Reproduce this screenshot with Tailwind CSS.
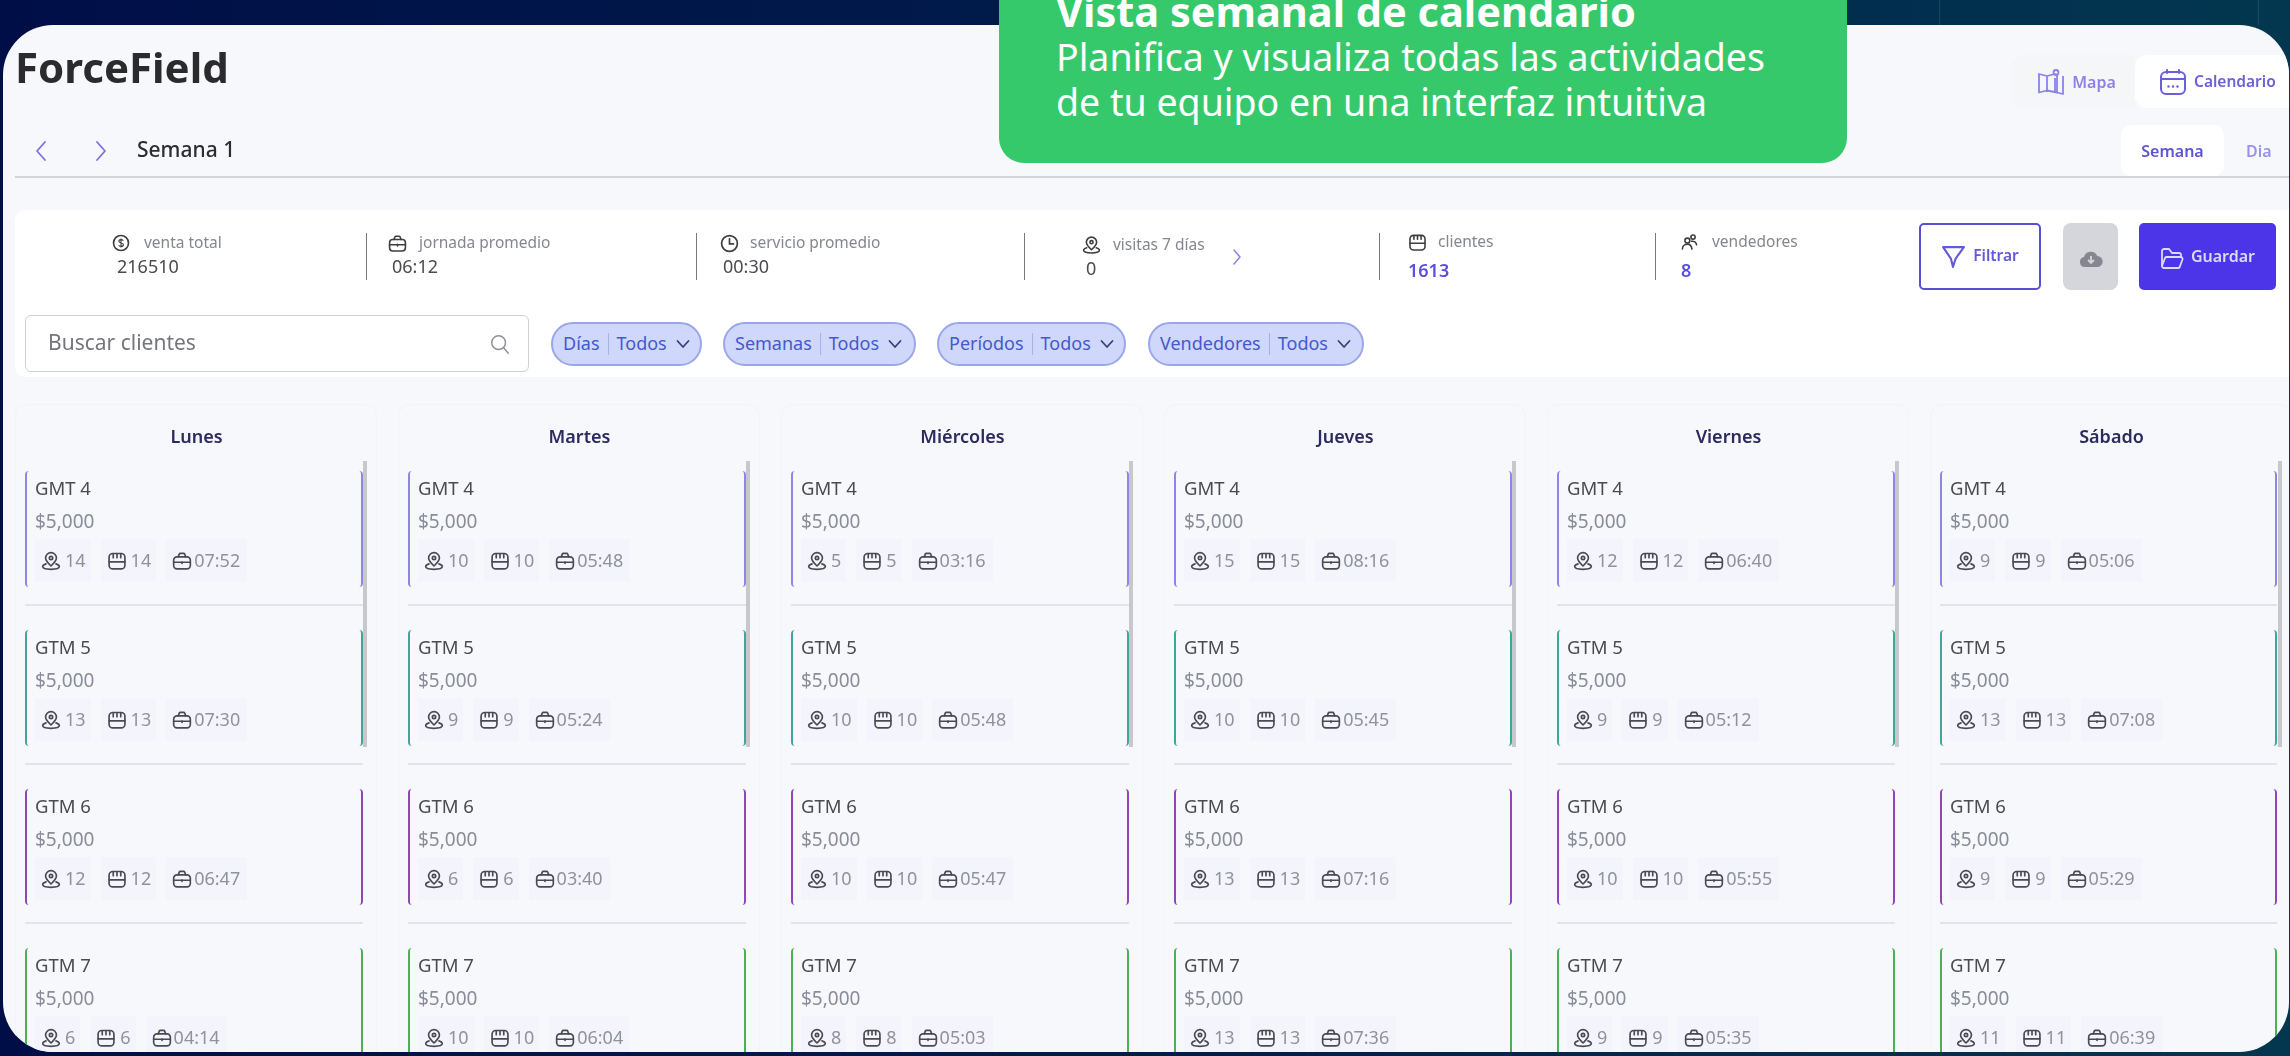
<!doctype html>
<html lang="es">
<head>
<meta charset="utf-8">
<title>ForceField</title>
<script src="https://cdn.jsdelivr.net/npm/@tailwindcss/browser@4"></script>
</head>
<body class="m-0 h-[1056px] w-[2290px] overflow-hidden font-['Noto_Sans','Open_Sans',sans-serif]">
<svg class="hidden" width="0" height="0">
  <symbol id="pin" viewBox="0 0 24 24" fill="none" stroke="currentColor" stroke-width="2" stroke-linecap="round" stroke-linejoin="round"><path d="M12 2a6.500 6.500 0 0 0-6.500 6.500c0 3.500 3 6.300 6.500 9.500 3.500-3.200 6.500-6 6.500-9.500A6.500 6.500 0 0 0 12 2z"/><circle cx="12" cy="8.500" r="2"/><path d="M6 15.500c-2.300.7-4 1.800-4 3.200 0 2 4.500 3.300 10 3.300s10-1.300 10-3.300c0-1.400-1.700-2.500-4-3.200"/></symbol>
  <symbol id="store" viewBox="0 0 24 24" fill="none" stroke="currentColor" stroke-width="2" stroke-linecap="round" stroke-linejoin="round"><rect x="2.500" y="3" width="19" height="18.500" rx="4.500"/><path d="M2.500 13h19M7.500 3.500v4.500M12 3.500v4.500M16.500 3.500v4.500"/></symbol>
  <symbol id="case" viewBox="0 0 24 24" fill="none" stroke="currentColor" stroke-width="2" stroke-linecap="round" stroke-linejoin="round"><rect x="2" y="7" width="20" height="14.500" rx="4"/><path d="M7.500 7l1.200-3.200a1.500 1.500 0 0 1 1.400-1h3.800a1.500 1.500 0 0 1 1.400 1L16.500 7M2 13.500h20M12 13v2"/></symbol>
</svg>

<div class="relative h-[1056px] w-[2290px] overflow-hidden bg-linear-to-r from-[#000e47] via-[#011c4b] to-[#03374f] pl-[3px] pt-[25px]">
  <div class="absolute left-[1939px] top-0 h-[25px] w-px bg-white/10"></div>
  <div class="absolute left-[2258px] top-0 h-[25px] w-px bg-white/10"></div>

  <div class="h-[1027px] w-[2286px] overflow-hidden rounded-[50px] bg-[#f7f8fc] pl-[12px] pt-[30px] blur-[0.5px]">
    <div class="flex h-[53px] items-center justify-between">
      <h1 class="m-0 mb-[30px] text-[42px] leading-none font-bold text-[#2b2b2e]">ForceField</h1>
      <div class="flex h-[53px]">
        <div class="flex w-[123px] items-center justify-center gap-[7px] rounded-l-xl bg-[#f5f6f8] pl-[6px] text-[16px] font-semibold text-[#8c82e6]">
          <svg class="h-[28px] w-[28px]" viewBox="0 0 28 28" fill="none" stroke="currentColor" stroke-width="1.800" stroke-linejoin="round"><path d="M2 6l8 2 8-2 2 .5v18l-10-2-8 2zM10 8v16M18 10v14"/><circle cx="19" cy="4.500" r="2.500"/><path d="M26 8v18l-6-1.500"/></svg>
          Mapa
        </div>
        <div class="flex w-[154px] items-center gap-[7px] rounded-l-xl bg-white pl-[24px] text-[15.500px] font-semibold text-[#6a60da]">
          <svg class="h-[28px] w-[28px]" viewBox="0 0 28 28" fill="none" stroke="currentColor" stroke-width="2" stroke-linecap="round" stroke-linejoin="round"><rect x="2" y="4" width="24" height="22" rx="5"/><path d="M2 11h24M8 2v3M20 2v3"/><path d="M9.500 18.500h.01M14 18.500h.01M18.500 18.500h.01" stroke-width="2.500"/></svg>
          Calendario
        </div>
      </div>
    </div>

    <div class="mt-[17px] flex h-[53px] items-start justify-between border-b-2 border-[#d2d4da]">
      <div class="flex h-[51px] items-center text-[#7d70e4]">
        <svg class="ml-[18px] h-[24px] w-[16px]" viewBox="0 0 16 24" fill="none" stroke="currentColor" stroke-width="1.800" stroke-linecap="round" stroke-linejoin="round"><path d="M12 3L4 12l8 9"/></svg>
        <svg class="ml-[44px] h-[24px] w-[16px]" viewBox="0 0 16 24" fill="none" stroke="currentColor" stroke-width="1.800" stroke-linecap="round" stroke-linejoin="round"><path d="M4 3l8 9-8 9"/></svg>
        <span class="mb-[2px] ml-[28px] text-[21px] font-medium text-[#2d2d30]">Semana 1</span>
      </div>
      <div class="flex h-[51px]">
        <div class="flex w-[103px] items-center justify-center rounded-[10px] bg-white text-[16px] font-semibold text-[#5f55d4]">Semana</div>
        <div class="flex w-[65px] items-center pl-[22px] text-[16px] font-semibold text-[#9b92ea]">Dia</div>
      </div>
    </div>

    <section class="mt-[32px] h-[167px] rounded-l-[10px] bg-white pt-[13px]">
      <div class="flex h-[67px] items-center">
        <div class="h-[47px] w-[351px] pl-[97px]">
          <div class="flex h-[20px] items-center gap-[14px] text-[15.500px] text-[#85878f]"><svg class="h-[18px] w-[18px] text-[#3e3e42]" viewBox="0 0 24 24" fill="none" stroke="currentColor" stroke-width="2.200"><circle cx="12" cy="12" r="10"/><path d="M15 9c-.5-1.200-1.500-1.500-3-1.500-1.600 0-2.800.7-2.800 2.200 0 3 6 1.500 6 4.500 0 1.500-1.400 2.300-3.200 2.300-1.500 0-2.600-.5-3.100-1.700M12 6v12" stroke-width="1.500"/></svg>venta total</div>
          <div class="ml-[5px] mt-[2px] text-[18px] leading-[22px] text-[#4b4b50]">216510</div>
        </div>
        <div class="h-[47px] w-[330px] border-l-[1.500px] border-[#77787d] pl-[21px]">
          <div class="flex h-[20px] items-center gap-[12px] text-[15.500px] text-[#85878f]"><svg class="h-[19px] w-[19px] text-[#3e3e42]"><use href="#case"/></svg>jornada promedio</div>
          <div class="ml-[4px] mt-[2px] text-[18px] leading-[22px] text-[#4b4b50]">06:12</div>
        </div>
        <div class="h-[47px] w-[328px] border-l-[1.500px] border-[#77787d] pl-[23px]">
          <div class="flex h-[20px] items-center gap-[11px] text-[15.500px] text-[#85878f]"><svg class="h-[19px] w-[19px] text-[#3e3e42]" viewBox="0 0 24 24" fill="none" stroke="currentColor" stroke-width="2.200" stroke-linecap="round"><circle cx="12" cy="12" r="10"/><path d="M12 6v6.500h5"/></svg>servicio promedio</div>
          <div class="ml-[3px] mt-[2px] text-[18px] leading-[22px] text-[#4b4b50]">00:30</div>
        </div>
        <div class="flex h-[47px] w-[355px] items-center border-l-[1.500px] border-[#77787d] pl-[57px]">
          <div class="w-[150px]">
            <div class="flex h-[20px] items-center gap-[12px] text-[15.500px] text-[#85878f]"><svg class="h-[20px] w-[19px] text-[#3e3e42]"><use href="#pin"/></svg>visitas 7 días</div>
            <div class="ml-[4px] mt-[2px] text-[18px] leading-[22px] text-[#4b4b50]">0</div>
          </div>
          <svg class="h-[18px] w-[10px] text-[#8c80e8]" viewBox="0 0 10 18" fill="none" stroke="currentColor" stroke-width="1.500" stroke-linecap="round" stroke-linejoin="round"><path d="M2 2l6 7-6 7"/></svg>
        </div>
        <div class="h-[47px] w-[276px] border-l-[1.500px] border-[#77787d] pl-[28px]">
          <div class="flex h-[18px] items-center gap-[11px] text-[15.500px] text-[#85878f]"><svg class="h-[19px] w-[19px] text-[#3e3e42]"><use href="#store"/></svg>clientes</div>
          <div class="mt-[9px] text-[18px] leading-[20px] font-semibold text-[#5b4ee2]">1613</div>
        </div>
        <div class="h-[47px] w-[264px] border-l-[1.500px] border-[#77787d] pl-[25px]">
          <div class="flex h-[18px] items-center gap-[14px] text-[15.500px] text-[#85878f]"><svg class="h-[18px] w-[17px] text-[#3e3e42]" viewBox="0 0 24 24" fill="none" stroke="currentColor" stroke-width="2.200" stroke-linecap="round"><circle cx="9" cy="10" r="3.500"/><circle cx="17" cy="5" r="3"/><path d="M2 22c0-4 3-7 7-7s6 3 6.500 7M15 11c3.500-.5 6.500 1.500 7 5"/></svg>vendedores</div>
          <div class="mt-[9px] text-[18px] leading-[20px] font-semibold text-[#5b4ee2]">8</div>
        </div>
        <button class="flex h-[67px] w-[122px] items-center justify-center gap-[7px] rounded-[5px] border-2 border-[#5a4fd3] bg-white pb-[2px] text-[15.500px] font-semibold text-[#6458d8]">
          <svg class="mt-[2px] h-[25px] w-[25px]" viewBox="0 0 24 24" fill="none" stroke="currentColor" stroke-width="2" stroke-linejoin="round"><path d="M2 3h20l-8 11-2.500 8-2-8z"/></svg>Filtrar
        </button>
        <button class="ml-[22px] flex h-[67px] w-[55px] items-center justify-center rounded-[8px] bg-[#d5d6db]">
          <svg class="mt-[4px] h-[20px] w-[24px]" viewBox="0 0 24 20"><path fill="#85868f" d="M6 18a5 5 0 0 1-1-9.900A7 7 0 0 1 18.300 7 5.500 5.500 0 0 1 18 18z"/><path d="M12 7v6M9 11l3 3 3-3" fill="none" stroke="#d5d6db" stroke-width="1.800"/></svg>
        </button>
        <button class="ml-[21px] flex h-[67px] w-[137px] items-center justify-center gap-[7px] rounded-[5px] bg-[#4c35e8] pb-[2px] text-[16px] font-semibold text-[#dcdaf9]">
          <svg class="mt-[4px] h-[24px] w-[24px]" viewBox="0 0 24 24" fill="none" stroke="currentColor" stroke-width="1.800" stroke-linejoin="round"><path d="M2 20V5a2 2 0 0 1 2-2h5l3 4h7a2 2 0 0 1 2 2v2"/><path d="M2 20l3-8a2 2 0 0 1 2-1h14a2 2 0 0 1 1.500 2.500L20 20a2 2 0 0 1-2 2H4a2 2 0 0 1-2-2z"/></svg>Guardar
        </button>
      </div>

      <div class="mt-[25px] flex items-center pl-[10px]">
        <div class="flex h-[57px] w-[504px] items-center justify-between rounded-[6px] border-[1.500px] border-[#cfd0d5] bg-white pb-[2px] pl-[22px] pr-[17px] text-[21px] text-[#74767c]">
          Buscar clientes
          <svg class="mt-[3px] h-[22px] w-[22px] text-[#8e9096]" viewBox="0 0 24 24" fill="none" stroke="currentColor" stroke-width="1.600" stroke-linecap="round"><circle cx="10.500" cy="10.500" r="7.500"/><path d="M16 16l5 6"/></svg>
        </div>
        <div class="ml-[22px] flex h-[44px] w-[151px] items-center gap-[8px] rounded-full border-2 border-[#9aa6ea] bg-[#cfd7fb] pl-[10px] text-[18px] text-[#4558cc]">Días<span class="h-[22px] w-px bg-[#a7b0e2]"></span>Todos<svg class="ml-[1px] h-[10px] w-[14px] text-[#3a3f7a]" viewBox="0 0 14 10" fill="none" stroke="currentColor" stroke-width="1.800" stroke-linecap="round" stroke-linejoin="round"><path d="M1.500 2l5.500 6 5.500-6"/></svg></div>
        <div class="ml-[21px] flex h-[44px] w-[193px] items-center gap-[8px] rounded-full border-2 border-[#9aa6ea] bg-[#cfd7fb] pl-[10px] text-[18px] text-[#4558cc]">Semanas<span class="h-[22px] w-px bg-[#a7b0e2]"></span>Todos<svg class="ml-[1px] h-[10px] w-[14px] text-[#3a3f7a]" viewBox="0 0 14 10" fill="none" stroke="currentColor" stroke-width="1.800" stroke-linecap="round" stroke-linejoin="round"><path d="M1.500 2l5.500 6 5.500-6"/></svg></div>
        <div class="ml-[21px] flex h-[44px] w-[189px] items-center gap-[8px] rounded-full border-2 border-[#9aa6ea] bg-[#cfd7fb] pl-[10px] text-[18px] text-[#4558cc]">Períodos<span class="h-[22px] w-px bg-[#a7b0e2]"></span>Todos<svg class="ml-[1px] h-[10px] w-[14px] text-[#3a3f7a]" viewBox="0 0 14 10" fill="none" stroke="currentColor" stroke-width="1.800" stroke-linecap="round" stroke-linejoin="round"><path d="M1.500 2l5.500 6 5.500-6"/></svg></div>
        <div class="ml-[22px] flex h-[44px] w-[216px] items-center gap-[8px] rounded-full border-2 border-[#9aa6ea] bg-[#cfd7fb] pl-[10px] text-[18px] text-[#4558cc]">Vendedores<span class="h-[22px] w-px bg-[#a7b0e2]"></span>Todos<svg class="ml-[1px] h-[10px] w-[14px] text-[#3a3f7a]" viewBox="0 0 14 10" fill="none" stroke="currentColor" stroke-width="1.800" stroke-linecap="round" stroke-linejoin="round"><path d="M1.500 2l5.500 6 5.500-6"/></svg></div>
      </div>
    </section>

    <div class="mt-[27px] flex gap-[21px]">

      <!-- Lunes -->
      <div class="relative h-[700px] w-[362px] shrink-0 rounded-xl border border-[#f3f4f8] pl-[9px]">
        <div class="absolute left-[347px] top-[56px] h-[286px] w-[4px] bg-[#c7c8cb]"></div>
        <h2 class="m-0 h-[24px] mt-[19px] -ml-[9px] w-[361px] text-center text-[18px] leading-[24px] font-semibold text-[#2d2a5e]">Lunes</h2>
        <div class="mt-[23px] h-[116px] w-[338px] rounded-[4px] border-x-2 border-[#8f84e8] pl-[8px] pt-[5px]"><div class="text-[18.500px] leading-[24px] text-[#4b4b4f]">GMT 4</div><div class="mt-[9px] text-[19px] leading-[24px] text-[#8a8d99]">$5,000</div><div class="mt-[6px] flex h-[43px] gap-[10px] text-[18px] text-[#8f929c]"><span class="flex items-center gap-[4px] bg-[#f4f4fc] pl-[6px] pr-[5px]"><svg class="h-[20px] w-[20px] text-[#4a4a50]"><use href="#pin"/></svg>14</span><span class="flex items-center gap-[4px] bg-[#f4f4fc] pl-[6px] pr-[5px]"><svg class="h-[20px] w-[20px] text-[#4a4a50]"><use href="#store"/></svg>14</span><span class="flex items-center gap-[2px] bg-[#f4f4fc] pl-[6px] pr-[7px]"><svg class="h-[20px] w-[20px] text-[#4a4a50]"><use href="#case"/></svg>07:52</span></div></div>
        <div class="mt-[17px] h-[2px] w-[338px] bg-[#e3e4e9]"></div>
        <div class="mt-[24px] h-[116px] w-[338px] rounded-[4px] border-x-2 border-[#3fa79a] pl-[8px] pt-[5px]"><div class="text-[18.500px] leading-[24px] text-[#4b4b4f]">GTM 5</div><div class="mt-[9px] text-[19px] leading-[24px] text-[#8a8d99]">$5,000</div><div class="mt-[6px] flex h-[43px] gap-[10px] text-[18px] text-[#8f929c]"><span class="flex items-center gap-[4px] bg-[#f4f4fc] pl-[6px] pr-[5px]"><svg class="h-[20px] w-[20px] text-[#4a4a50]"><use href="#pin"/></svg>13</span><span class="flex items-center gap-[4px] bg-[#f4f4fc] pl-[6px] pr-[5px]"><svg class="h-[20px] w-[20px] text-[#4a4a50]"><use href="#store"/></svg>13</span><span class="flex items-center gap-[2px] bg-[#f4f4fc] pl-[6px] pr-[7px]"><svg class="h-[20px] w-[20px] text-[#4a4a50]"><use href="#case"/></svg>07:30</span></div></div>
        <div class="mt-[17px] h-[2px] w-[338px] bg-[#e3e4e9]"></div>
        <div class="mt-[24px] h-[116px] w-[338px] rounded-[4px] border-x-2 border-[#9345b8] pl-[8px] pt-[5px]"><div class="text-[18.500px] leading-[24px] text-[#4b4b4f]">GTM 6</div><div class="mt-[9px] text-[19px] leading-[24px] text-[#8a8d99]">$5,000</div><div class="mt-[6px] flex h-[43px] gap-[10px] text-[18px] text-[#8f929c]"><span class="flex items-center gap-[4px] bg-[#f4f4fc] pl-[6px] pr-[5px]"><svg class="h-[20px] w-[20px] text-[#4a4a50]"><use href="#pin"/></svg>12</span><span class="flex items-center gap-[4px] bg-[#f4f4fc] pl-[6px] pr-[5px]"><svg class="h-[20px] w-[20px] text-[#4a4a50]"><use href="#store"/></svg>12</span><span class="flex items-center gap-[2px] bg-[#f4f4fc] pl-[6px] pr-[7px]"><svg class="h-[20px] w-[20px] text-[#4a4a50]"><use href="#case"/></svg>06:47</span></div></div>
        <div class="mt-[17px] h-[2px] w-[338px] bg-[#e3e4e9]"></div>
        <div class="mt-[24px] h-[116px] w-[338px] rounded-[4px] border-x-2 border-[#4eb054] pl-[8px] pt-[5px]"><div class="text-[18.500px] leading-[24px] text-[#4b4b4f]">GTM 7</div><div class="mt-[9px] text-[19px] leading-[24px] text-[#8a8d99]">$5,000</div><div class="mt-[6px] flex h-[43px] gap-[10px] text-[18px] text-[#8f929c]"><span class="flex items-center gap-[4px] bg-[#f4f4fc] pl-[6px] pr-[5px]"><svg class="h-[20px] w-[20px] text-[#4a4a50]"><use href="#pin"/></svg>6</span><span class="flex items-center gap-[4px] bg-[#f4f4fc] pl-[6px] pr-[5px]"><svg class="h-[20px] w-[20px] text-[#4a4a50]"><use href="#store"/></svg>6</span><span class="flex items-center gap-[2px] bg-[#f4f4fc] pl-[6px] pr-[7px]"><svg class="h-[20px] w-[20px] text-[#4a4a50]"><use href="#case"/></svg>04:14</span></div></div>
      </div>

      <!-- Martes -->
      <div class="relative h-[700px] w-[362px] shrink-0 rounded-xl border border-[#f3f4f8] pl-[9px]">
        <div class="absolute left-[347px] top-[56px] h-[286px] w-[4px] bg-[#c7c8cb]"></div>
        <h2 class="m-0 h-[24px] mt-[19px] -ml-[9px] w-[361px] text-center text-[18px] leading-[24px] font-semibold text-[#2d2a5e]">Martes</h2>
        <div class="mt-[23px] h-[116px] w-[338px] rounded-[4px] border-x-2 border-[#8f84e8] pl-[8px] pt-[5px]"><div class="text-[18.500px] leading-[24px] text-[#4b4b4f]">GMT 4</div><div class="mt-[9px] text-[19px] leading-[24px] text-[#8a8d99]">$5,000</div><div class="mt-[6px] flex h-[43px] gap-[10px] text-[18px] text-[#8f929c]"><span class="flex items-center gap-[4px] bg-[#f4f4fc] pl-[6px] pr-[5px]"><svg class="h-[20px] w-[20px] text-[#4a4a50]"><use href="#pin"/></svg>10</span><span class="flex items-center gap-[4px] bg-[#f4f4fc] pl-[6px] pr-[5px]"><svg class="h-[20px] w-[20px] text-[#4a4a50]"><use href="#store"/></svg>10</span><span class="flex items-center gap-[2px] bg-[#f4f4fc] pl-[6px] pr-[7px]"><svg class="h-[20px] w-[20px] text-[#4a4a50]"><use href="#case"/></svg>05:48</span></div></div>
        <div class="mt-[17px] h-[2px] w-[338px] bg-[#e3e4e9]"></div>
        <div class="mt-[24px] h-[116px] w-[338px] rounded-[4px] border-x-2 border-[#3fa79a] pl-[8px] pt-[5px]"><div class="text-[18.500px] leading-[24px] text-[#4b4b4f]">GTM 5</div><div class="mt-[9px] text-[19px] leading-[24px] text-[#8a8d99]">$5,000</div><div class="mt-[6px] flex h-[43px] gap-[10px] text-[18px] text-[#8f929c]"><span class="flex items-center gap-[4px] bg-[#f4f4fc] pl-[6px] pr-[5px]"><svg class="h-[20px] w-[20px] text-[#4a4a50]"><use href="#pin"/></svg>9</span><span class="flex items-center gap-[4px] bg-[#f4f4fc] pl-[6px] pr-[5px]"><svg class="h-[20px] w-[20px] text-[#4a4a50]"><use href="#store"/></svg>9</span><span class="flex items-center gap-[2px] bg-[#f4f4fc] pl-[6px] pr-[7px]"><svg class="h-[20px] w-[20px] text-[#4a4a50]"><use href="#case"/></svg>05:24</span></div></div>
        <div class="mt-[17px] h-[2px] w-[338px] bg-[#e3e4e9]"></div>
        <div class="mt-[24px] h-[116px] w-[338px] rounded-[4px] border-x-2 border-[#9345b8] pl-[8px] pt-[5px]"><div class="text-[18.500px] leading-[24px] text-[#4b4b4f]">GTM 6</div><div class="mt-[9px] text-[19px] leading-[24px] text-[#8a8d99]">$5,000</div><div class="mt-[6px] flex h-[43px] gap-[10px] text-[18px] text-[#8f929c]"><span class="flex items-center gap-[4px] bg-[#f4f4fc] pl-[6px] pr-[5px]"><svg class="h-[20px] w-[20px] text-[#4a4a50]"><use href="#pin"/></svg>6</span><span class="flex items-center gap-[4px] bg-[#f4f4fc] pl-[6px] pr-[5px]"><svg class="h-[20px] w-[20px] text-[#4a4a50]"><use href="#store"/></svg>6</span><span class="flex items-center gap-[2px] bg-[#f4f4fc] pl-[6px] pr-[7px]"><svg class="h-[20px] w-[20px] text-[#4a4a50]"><use href="#case"/></svg>03:40</span></div></div>
        <div class="mt-[17px] h-[2px] w-[338px] bg-[#e3e4e9]"></div>
        <div class="mt-[24px] h-[116px] w-[338px] rounded-[4px] border-x-2 border-[#4eb054] pl-[8px] pt-[5px]"><div class="text-[18.500px] leading-[24px] text-[#4b4b4f]">GTM 7</div><div class="mt-[9px] text-[19px] leading-[24px] text-[#8a8d99]">$5,000</div><div class="mt-[6px] flex h-[43px] gap-[10px] text-[18px] text-[#8f929c]"><span class="flex items-center gap-[4px] bg-[#f4f4fc] pl-[6px] pr-[5px]"><svg class="h-[20px] w-[20px] text-[#4a4a50]"><use href="#pin"/></svg>10</span><span class="flex items-center gap-[4px] bg-[#f4f4fc] pl-[6px] pr-[5px]"><svg class="h-[20px] w-[20px] text-[#4a4a50]"><use href="#store"/></svg>10</span><span class="flex items-center gap-[2px] bg-[#f4f4fc] pl-[6px] pr-[7px]"><svg class="h-[20px] w-[20px] text-[#4a4a50]"><use href="#case"/></svg>06:04</span></div></div>
      </div>

      <!-- Miércoles -->
      <div class="relative h-[700px] w-[362px] shrink-0 rounded-xl border border-[#f3f4f8] pl-[9px]">
        <div class="absolute left-[347px] top-[56px] h-[286px] w-[4px] bg-[#c7c8cb]"></div>
        <h2 class="m-0 h-[24px] mt-[19px] -ml-[9px] w-[361px] text-center text-[18px] leading-[24px] font-semibold text-[#2d2a5e]">Miércoles</h2>
        <div class="mt-[23px] h-[116px] w-[338px] rounded-[4px] border-x-2 border-[#8f84e8] pl-[8px] pt-[5px]"><div class="text-[18.500px] leading-[24px] text-[#4b4b4f]">GMT 4</div><div class="mt-[9px] text-[19px] leading-[24px] text-[#8a8d99]">$5,000</div><div class="mt-[6px] flex h-[43px] gap-[10px] text-[18px] text-[#8f929c]"><span class="flex items-center gap-[4px] bg-[#f4f4fc] pl-[6px] pr-[5px]"><svg class="h-[20px] w-[20px] text-[#4a4a50]"><use href="#pin"/></svg>5</span><span class="flex items-center gap-[4px] bg-[#f4f4fc] pl-[6px] pr-[5px]"><svg class="h-[20px] w-[20px] text-[#4a4a50]"><use href="#store"/></svg>5</span><span class="flex items-center gap-[2px] bg-[#f4f4fc] pl-[6px] pr-[7px]"><svg class="h-[20px] w-[20px] text-[#4a4a50]"><use href="#case"/></svg>03:16</span></div></div>
        <div class="mt-[17px] h-[2px] w-[338px] bg-[#e3e4e9]"></div>
        <div class="mt-[24px] h-[116px] w-[338px] rounded-[4px] border-x-2 border-[#3fa79a] pl-[8px] pt-[5px]"><div class="text-[18.500px] leading-[24px] text-[#4b4b4f]">GTM 5</div><div class="mt-[9px] text-[19px] leading-[24px] text-[#8a8d99]">$5,000</div><div class="mt-[6px] flex h-[43px] gap-[10px] text-[18px] text-[#8f929c]"><span class="flex items-center gap-[4px] bg-[#f4f4fc] pl-[6px] pr-[5px]"><svg class="h-[20px] w-[20px] text-[#4a4a50]"><use href="#pin"/></svg>10</span><span class="flex items-center gap-[4px] bg-[#f4f4fc] pl-[6px] pr-[5px]"><svg class="h-[20px] w-[20px] text-[#4a4a50]"><use href="#store"/></svg>10</span><span class="flex items-center gap-[2px] bg-[#f4f4fc] pl-[6px] pr-[7px]"><svg class="h-[20px] w-[20px] text-[#4a4a50]"><use href="#case"/></svg>05:48</span></div></div>
        <div class="mt-[17px] h-[2px] w-[338px] bg-[#e3e4e9]"></div>
        <div class="mt-[24px] h-[116px] w-[338px] rounded-[4px] border-x-2 border-[#9345b8] pl-[8px] pt-[5px]"><div class="text-[18.500px] leading-[24px] text-[#4b4b4f]">GTM 6</div><div class="mt-[9px] text-[19px] leading-[24px] text-[#8a8d99]">$5,000</div><div class="mt-[6px] flex h-[43px] gap-[10px] text-[18px] text-[#8f929c]"><span class="flex items-center gap-[4px] bg-[#f4f4fc] pl-[6px] pr-[5px]"><svg class="h-[20px] w-[20px] text-[#4a4a50]"><use href="#pin"/></svg>10</span><span class="flex items-center gap-[4px] bg-[#f4f4fc] pl-[6px] pr-[5px]"><svg class="h-[20px] w-[20px] text-[#4a4a50]"><use href="#store"/></svg>10</span><span class="flex items-center gap-[2px] bg-[#f4f4fc] pl-[6px] pr-[7px]"><svg class="h-[20px] w-[20px] text-[#4a4a50]"><use href="#case"/></svg>05:47</span></div></div>
        <div class="mt-[17px] h-[2px] w-[338px] bg-[#e3e4e9]"></div>
        <div class="mt-[24px] h-[116px] w-[338px] rounded-[4px] border-x-2 border-[#4eb054] pl-[8px] pt-[5px]"><div class="text-[18.500px] leading-[24px] text-[#4b4b4f]">GTM 7</div><div class="mt-[9px] text-[19px] leading-[24px] text-[#8a8d99]">$5,000</div><div class="mt-[6px] flex h-[43px] gap-[10px] text-[18px] text-[#8f929c]"><span class="flex items-center gap-[4px] bg-[#f4f4fc] pl-[6px] pr-[5px]"><svg class="h-[20px] w-[20px] text-[#4a4a50]"><use href="#pin"/></svg>8</span><span class="flex items-center gap-[4px] bg-[#f4f4fc] pl-[6px] pr-[5px]"><svg class="h-[20px] w-[20px] text-[#4a4a50]"><use href="#store"/></svg>8</span><span class="flex items-center gap-[2px] bg-[#f4f4fc] pl-[6px] pr-[7px]"><svg class="h-[20px] w-[20px] text-[#4a4a50]"><use href="#case"/></svg>05:03</span></div></div>
      </div>

      <!-- Jueves -->
      <div class="relative h-[700px] w-[362px] shrink-0 rounded-xl border border-[#f3f4f8] pl-[9px]">
        <div class="absolute left-[347px] top-[56px] h-[286px] w-[4px] bg-[#c7c8cb]"></div>
        <h2 class="m-0 h-[24px] mt-[19px] -ml-[9px] w-[361px] text-center text-[18px] leading-[24px] font-semibold text-[#2d2a5e]">Jueves</h2>
        <div class="mt-[23px] h-[116px] w-[338px] rounded-[4px] border-x-2 border-[#8f84e8] pl-[8px] pt-[5px]"><div class="text-[18.500px] leading-[24px] text-[#4b4b4f]">GMT 4</div><div class="mt-[9px] text-[19px] leading-[24px] text-[#8a8d99]">$5,000</div><div class="mt-[6px] flex h-[43px] gap-[10px] text-[18px] text-[#8f929c]"><span class="flex items-center gap-[4px] bg-[#f4f4fc] pl-[6px] pr-[5px]"><svg class="h-[20px] w-[20px] text-[#4a4a50]"><use href="#pin"/></svg>15</span><span class="flex items-center gap-[4px] bg-[#f4f4fc] pl-[6px] pr-[5px]"><svg class="h-[20px] w-[20px] text-[#4a4a50]"><use href="#store"/></svg>15</span><span class="flex items-center gap-[2px] bg-[#f4f4fc] pl-[6px] pr-[7px]"><svg class="h-[20px] w-[20px] text-[#4a4a50]"><use href="#case"/></svg>08:16</span></div></div>
        <div class="mt-[17px] h-[2px] w-[338px] bg-[#e3e4e9]"></div>
        <div class="mt-[24px] h-[116px] w-[338px] rounded-[4px] border-x-2 border-[#3fa79a] pl-[8px] pt-[5px]"><div class="text-[18.500px] leading-[24px] text-[#4b4b4f]">GTM 5</div><div class="mt-[9px] text-[19px] leading-[24px] text-[#8a8d99]">$5,000</div><div class="mt-[6px] flex h-[43px] gap-[10px] text-[18px] text-[#8f929c]"><span class="flex items-center gap-[4px] bg-[#f4f4fc] pl-[6px] pr-[5px]"><svg class="h-[20px] w-[20px] text-[#4a4a50]"><use href="#pin"/></svg>10</span><span class="flex items-center gap-[4px] bg-[#f4f4fc] pl-[6px] pr-[5px]"><svg class="h-[20px] w-[20px] text-[#4a4a50]"><use href="#store"/></svg>10</span><span class="flex items-center gap-[2px] bg-[#f4f4fc] pl-[6px] pr-[7px]"><svg class="h-[20px] w-[20px] text-[#4a4a50]"><use href="#case"/></svg>05:45</span></div></div>
        <div class="mt-[17px] h-[2px] w-[338px] bg-[#e3e4e9]"></div>
        <div class="mt-[24px] h-[116px] w-[338px] rounded-[4px] border-x-2 border-[#9345b8] pl-[8px] pt-[5px]"><div class="text-[18.500px] leading-[24px] text-[#4b4b4f]">GTM 6</div><div class="mt-[9px] text-[19px] leading-[24px] text-[#8a8d99]">$5,000</div><div class="mt-[6px] flex h-[43px] gap-[10px] text-[18px] text-[#8f929c]"><span class="flex items-center gap-[4px] bg-[#f4f4fc] pl-[6px] pr-[5px]"><svg class="h-[20px] w-[20px] text-[#4a4a50]"><use href="#pin"/></svg>13</span><span class="flex items-center gap-[4px] bg-[#f4f4fc] pl-[6px] pr-[5px]"><svg class="h-[20px] w-[20px] text-[#4a4a50]"><use href="#store"/></svg>13</span><span class="flex items-center gap-[2px] bg-[#f4f4fc] pl-[6px] pr-[7px]"><svg class="h-[20px] w-[20px] text-[#4a4a50]"><use href="#case"/></svg>07:16</span></div></div>
        <div class="mt-[17px] h-[2px] w-[338px] bg-[#e3e4e9]"></div>
        <div class="mt-[24px] h-[116px] w-[338px] rounded-[4px] border-x-2 border-[#4eb054] pl-[8px] pt-[5px]"><div class="text-[18.500px] leading-[24px] text-[#4b4b4f]">GTM 7</div><div class="mt-[9px] text-[19px] leading-[24px] text-[#8a8d99]">$5,000</div><div class="mt-[6px] flex h-[43px] gap-[10px] text-[18px] text-[#8f929c]"><span class="flex items-center gap-[4px] bg-[#f4f4fc] pl-[6px] pr-[5px]"><svg class="h-[20px] w-[20px] text-[#4a4a50]"><use href="#pin"/></svg>13</span><span class="flex items-center gap-[4px] bg-[#f4f4fc] pl-[6px] pr-[5px]"><svg class="h-[20px] w-[20px] text-[#4a4a50]"><use href="#store"/></svg>13</span><span class="flex items-center gap-[2px] bg-[#f4f4fc] pl-[6px] pr-[7px]"><svg class="h-[20px] w-[20px] text-[#4a4a50]"><use href="#case"/></svg>07:36</span></div></div>
      </div>

      <!-- Viernes -->
      <div class="relative h-[700px] w-[362px] shrink-0 rounded-xl border border-[#f3f4f8] pl-[9px]">
        <div class="absolute left-[347px] top-[56px] h-[286px] w-[4px] bg-[#c7c8cb]"></div>
        <h2 class="m-0 h-[24px] mt-[19px] -ml-[9px] w-[361px] text-center text-[18px] leading-[24px] font-semibold text-[#2d2a5e]">Viernes</h2>
        <div class="mt-[23px] h-[116px] w-[338px] rounded-[4px] border-x-2 border-[#8f84e8] pl-[8px] pt-[5px]"><div class="text-[18.500px] leading-[24px] text-[#4b4b4f]">GMT 4</div><div class="mt-[9px] text-[19px] leading-[24px] text-[#8a8d99]">$5,000</div><div class="mt-[6px] flex h-[43px] gap-[10px] text-[18px] text-[#8f929c]"><span class="flex items-center gap-[4px] bg-[#f4f4fc] pl-[6px] pr-[5px]"><svg class="h-[20px] w-[20px] text-[#4a4a50]"><use href="#pin"/></svg>12</span><span class="flex items-center gap-[4px] bg-[#f4f4fc] pl-[6px] pr-[5px]"><svg class="h-[20px] w-[20px] text-[#4a4a50]"><use href="#store"/></svg>12</span><span class="flex items-center gap-[2px] bg-[#f4f4fc] pl-[6px] pr-[7px]"><svg class="h-[20px] w-[20px] text-[#4a4a50]"><use href="#case"/></svg>06:40</span></div></div>
        <div class="mt-[17px] h-[2px] w-[338px] bg-[#e3e4e9]"></div>
        <div class="mt-[24px] h-[116px] w-[338px] rounded-[4px] border-x-2 border-[#3fa79a] pl-[8px] pt-[5px]"><div class="text-[18.500px] leading-[24px] text-[#4b4b4f]">GTM 5</div><div class="mt-[9px] text-[19px] leading-[24px] text-[#8a8d99]">$5,000</div><div class="mt-[6px] flex h-[43px] gap-[10px] text-[18px] text-[#8f929c]"><span class="flex items-center gap-[4px] bg-[#f4f4fc] pl-[6px] pr-[5px]"><svg class="h-[20px] w-[20px] text-[#4a4a50]"><use href="#pin"/></svg>9</span><span class="flex items-center gap-[4px] bg-[#f4f4fc] pl-[6px] pr-[5px]"><svg class="h-[20px] w-[20px] text-[#4a4a50]"><use href="#store"/></svg>9</span><span class="flex items-center gap-[2px] bg-[#f4f4fc] pl-[6px] pr-[7px]"><svg class="h-[20px] w-[20px] text-[#4a4a50]"><use href="#case"/></svg>05:12</span></div></div>
        <div class="mt-[17px] h-[2px] w-[338px] bg-[#e3e4e9]"></div>
        <div class="mt-[24px] h-[116px] w-[338px] rounded-[4px] border-x-2 border-[#9345b8] pl-[8px] pt-[5px]"><div class="text-[18.500px] leading-[24px] text-[#4b4b4f]">GTM 6</div><div class="mt-[9px] text-[19px] leading-[24px] text-[#8a8d99]">$5,000</div><div class="mt-[6px] flex h-[43px] gap-[10px] text-[18px] text-[#8f929c]"><span class="flex items-center gap-[4px] bg-[#f4f4fc] pl-[6px] pr-[5px]"><svg class="h-[20px] w-[20px] text-[#4a4a50]"><use href="#pin"/></svg>10</span><span class="flex items-center gap-[4px] bg-[#f4f4fc] pl-[6px] pr-[5px]"><svg class="h-[20px] w-[20px] text-[#4a4a50]"><use href="#store"/></svg>10</span><span class="flex items-center gap-[2px] bg-[#f4f4fc] pl-[6px] pr-[7px]"><svg class="h-[20px] w-[20px] text-[#4a4a50]"><use href="#case"/></svg>05:55</span></div></div>
        <div class="mt-[17px] h-[2px] w-[338px] bg-[#e3e4e9]"></div>
        <div class="mt-[24px] h-[116px] w-[338px] rounded-[4px] border-x-2 border-[#4eb054] pl-[8px] pt-[5px]"><div class="text-[18.500px] leading-[24px] text-[#4b4b4f]">GTM 7</div><div class="mt-[9px] text-[19px] leading-[24px] text-[#8a8d99]">$5,000</div><div class="mt-[6px] flex h-[43px] gap-[10px] text-[18px] text-[#8f929c]"><span class="flex items-center gap-[4px] bg-[#f4f4fc] pl-[6px] pr-[5px]"><svg class="h-[20px] w-[20px] text-[#4a4a50]"><use href="#pin"/></svg>9</span><span class="flex items-center gap-[4px] bg-[#f4f4fc] pl-[6px] pr-[5px]"><svg class="h-[20px] w-[20px] text-[#4a4a50]"><use href="#store"/></svg>9</span><span class="flex items-center gap-[2px] bg-[#f4f4fc] pl-[6px] pr-[7px]"><svg class="h-[20px] w-[20px] text-[#4a4a50]"><use href="#case"/></svg>05:35</span></div></div>
      </div>

      <!-- Sábado -->
      <div class="relative h-[700px] w-[362px] shrink-0 rounded-xl border border-[#f3f4f8] pl-[9px]">
        <div class="absolute left-[347px] top-[56px] h-[286px] w-[4px] bg-[#c7c8cb]"></div>
        <h2 class="m-0 h-[24px] mt-[19px] -ml-[9px] w-[361px] text-center text-[18px] leading-[24px] font-semibold text-[#2d2a5e]">Sábado</h2>
        <div class="mt-[23px] h-[116px] w-[337px] rounded-[4px] border-x-2 border-[#8f84e8] pl-[8px] pt-[5px]"><div class="text-[18.500px] leading-[24px] text-[#4b4b4f]">GMT 4</div><div class="mt-[9px] text-[19px] leading-[24px] text-[#8a8d99]">$5,000</div><div class="mt-[6px] flex h-[43px] gap-[10px] text-[18px] text-[#8f929c]"><span class="flex items-center gap-[4px] bg-[#f4f4fc] pl-[6px] pr-[5px]"><svg class="h-[20px] w-[20px] text-[#4a4a50]"><use href="#pin"/></svg>9</span><span class="flex items-center gap-[4px] bg-[#f4f4fc] pl-[6px] pr-[5px]"><svg class="h-[20px] w-[20px] text-[#4a4a50]"><use href="#store"/></svg>9</span><span class="flex items-center gap-[2px] bg-[#f4f4fc] pl-[6px] pr-[7px]"><svg class="h-[20px] w-[20px] text-[#4a4a50]"><use href="#case"/></svg>05:06</span></div></div>
        <div class="mt-[17px] h-[2px] w-[337px] bg-[#e3e4e9]"></div>
        <div class="mt-[24px] h-[116px] w-[337px] rounded-[4px] border-x-2 border-[#3fa79a] pl-[8px] pt-[5px]"><div class="text-[18.500px] leading-[24px] text-[#4b4b4f]">GTM 5</div><div class="mt-[9px] text-[19px] leading-[24px] text-[#8a8d99]">$5,000</div><div class="mt-[6px] flex h-[43px] gap-[10px] text-[18px] text-[#8f929c]"><span class="flex items-center gap-[4px] bg-[#f4f4fc] pl-[6px] pr-[5px]"><svg class="h-[20px] w-[20px] text-[#4a4a50]"><use href="#pin"/></svg>13</span><span class="flex items-center gap-[4px] bg-[#f4f4fc] pl-[6px] pr-[5px]"><svg class="h-[20px] w-[20px] text-[#4a4a50]"><use href="#store"/></svg>13</span><span class="flex items-center gap-[2px] bg-[#f4f4fc] pl-[6px] pr-[7px]"><svg class="h-[20px] w-[20px] text-[#4a4a50]"><use href="#case"/></svg>07:08</span></div></div>
        <div class="mt-[17px] h-[2px] w-[337px] bg-[#e3e4e9]"></div>
        <div class="mt-[24px] h-[116px] w-[337px] rounded-[4px] border-x-2 border-[#9345b8] pl-[8px] pt-[5px]"><div class="text-[18.500px] leading-[24px] text-[#4b4b4f]">GTM 6</div><div class="mt-[9px] text-[19px] leading-[24px] text-[#8a8d99]">$5,000</div><div class="mt-[6px] flex h-[43px] gap-[10px] text-[18px] text-[#8f929c]"><span class="flex items-center gap-[4px] bg-[#f4f4fc] pl-[6px] pr-[5px]"><svg class="h-[20px] w-[20px] text-[#4a4a50]"><use href="#pin"/></svg>9</span><span class="flex items-center gap-[4px] bg-[#f4f4fc] pl-[6px] pr-[5px]"><svg class="h-[20px] w-[20px] text-[#4a4a50]"><use href="#store"/></svg>9</span><span class="flex items-center gap-[2px] bg-[#f4f4fc] pl-[6px] pr-[7px]"><svg class="h-[20px] w-[20px] text-[#4a4a50]"><use href="#case"/></svg>05:29</span></div></div>
        <div class="mt-[17px] h-[2px] w-[337px] bg-[#e3e4e9]"></div>
        <div class="mt-[24px] h-[116px] w-[337px] rounded-[4px] border-x-2 border-[#4eb054] pl-[8px] pt-[5px]"><div class="text-[18.500px] leading-[24px] text-[#4b4b4f]">GTM 7</div><div class="mt-[9px] text-[19px] leading-[24px] text-[#8a8d99]">$5,000</div><div class="mt-[6px] flex h-[43px] gap-[10px] text-[18px] text-[#8f929c]"><span class="flex items-center gap-[4px] bg-[#f4f4fc] pl-[6px] pr-[5px]"><svg class="h-[20px] w-[20px] text-[#4a4a50]"><use href="#pin"/></svg>11</span><span class="flex items-center gap-[4px] bg-[#f4f4fc] pl-[6px] pr-[5px]"><svg class="h-[20px] w-[20px] text-[#4a4a50]"><use href="#store"/></svg>11</span><span class="flex items-center gap-[2px] bg-[#f4f4fc] pl-[6px] pr-[7px]"><svg class="h-[20px] w-[20px] text-[#4a4a50]"><use href="#case"/></svg>06:39</span></div></div>
      </div>
    </div>
  </div>

  <aside class="absolute left-[999px] top-[-20px] h-[183px] w-[848px] rounded-b-[25px] bg-[#35c96b] pl-[57px] pt-[9px] text-[37.500px] leading-[45px] text-white">
    <p class="m-0 text-[41.500px] font-bold">Vista semanal de calendario</p>
    <p class="m-0">Planifica y visualiza todas las actividades<br>de tu equipo en una interfaz intuitiva</p>
  </aside>
</div>
</body>
</html>
